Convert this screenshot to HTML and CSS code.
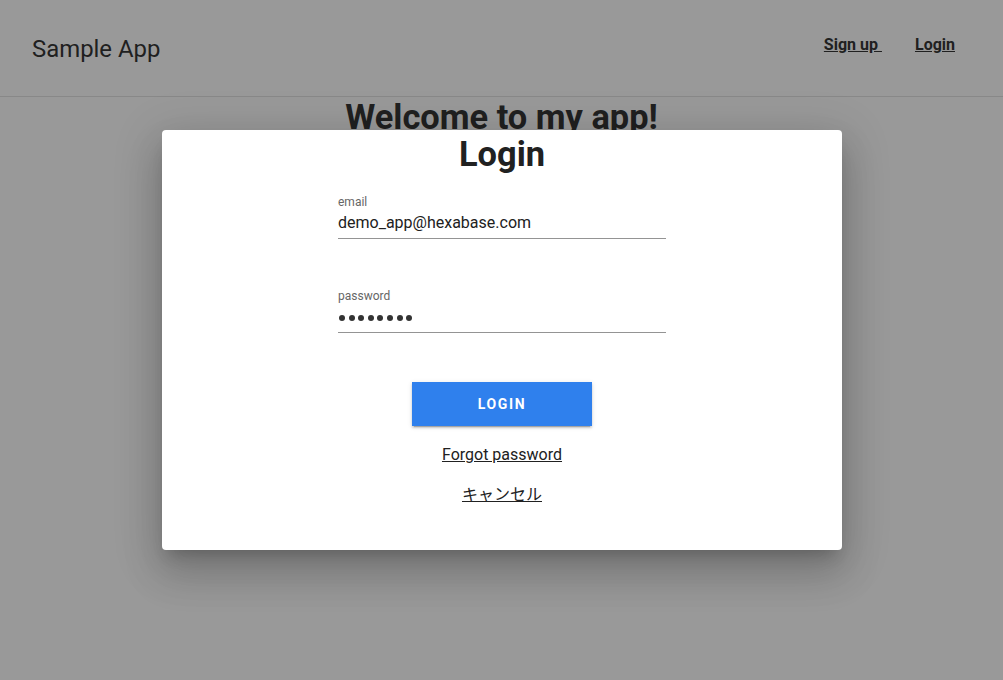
FILE: index.html
```html
<!DOCTYPE html>
<html lang="ja">
<head>
<meta charset="utf-8">
<title>Sample App</title>
<link rel="stylesheet" href="styles.css">
</head>
<body>
<header class="app-bar">
  <div class="brand">Sample App</div>
  <nav class="nav">
    <a class="nav-link" href="#">Sign up&nbsp;</a>
    <a class="nav-link" href="#">Login</a>
  </nav>
</header>
<main class="main">
  <h1 class="welcome">Welcome to my app!</h1>
</main>
<div class="overlay">
  <div class="dialog">
    <h2 class="dialog-title">Login</h2>
    <form class="form">
      <div class="field">
        <label class="field-label">email</label>
        <div class="field-value">demo_app@hexabase.com</div>
      </div>
      <div class="field field-pw">
        <label class="field-label">password</label>
        <div class="field-value dots"><span class="dot"></span><span class="dot"></span><span class="dot"></span><span class="dot"></span><span class="dot"></span><span class="dot"></span><span class="dot"></span><span class="dot"></span></div>
      </div>
      <div class="actions">
        <button type="button" class="btn">LOGIN</button>
        <a class="link" href="#">Forgot password</a>
        <a class="link cancel" href="#">キャンセル</a>
      </div>
    </form>
  </div>
</div>
</body>
</html>
```
FILE: styles.css
```css
* { box-sizing: border-box; }
html, body { margin: 0; padding: 0; }
body {
  font-family: Roboto, "Noto Sans CJK JP", sans-serif;
  color: #212121;
  background: #fff;
  width: 1003px;
  height: 680px;
  overflow: hidden;
  position: relative;
}
.app-bar {
  height: 97px;
  border-bottom: 1px solid #e0e0e0;
  display: flex;
  align-items: center;
  justify-content: space-between;
  padding: 0 48px 0 32px;
}
.brand {
  font-size: 23.9px;
  color: #212121;
  margin-top: 1px;
}
.nav {
  display: flex;
  gap: 33px;
  margin-top: -8px;
}
.nav-link {
  font-size: 16px;
  font-weight: 700;
  color: #212121;
  text-decoration: underline;
}
.main { text-align: center; }
.welcome {
  font-size: 34.4px;
  font-weight: 700;
  margin: 0;
  line-height: 40px;
}
.overlay {
  position: absolute;
  inset: 0;
  background: rgba(33, 33, 33, 0.46);
}
.dialog {
  position: absolute;
  left: 162px;
  top: 130px;
  width: 680px;
  height: 420px;
  background: #fff;
  border-radius: 4px;
  box-shadow: 0 11px 15px -7px rgba(0,0,0,.2), 0 24px 38px 3px rgba(0,0,0,.14), 0 9px 46px 8px rgba(0,0,0,.12);
  display: flex;
  flex-direction: column;
  align-items: center;
}
.dialog-title {
  font-size: 34.4px;
  font-weight: 700;
  margin: 4px 0 0;
  line-height: 40px;
}
.form {
  width: 328px;
  margin-top: 21px;
}
.field {
  border-bottom: 1px solid #949494;
  padding-bottom: 3px;
}
.field-pw { margin-top: 50px; padding-bottom: 2px; }
.field-label {
  display: block;
  font-size: 12px;
  line-height: 14px;
  color: #666;
}
.field-value {
  font-size: 16px;
  line-height: 24px;
  margin-top: 2px;
  color: #212121;
}
.dots {
  height: 24px;
  margin-top: 3px;
  display: flex;
  align-items: center;
  gap: 3.6px;
  padding-left: 1px;
}
.dot {
  width: 6px;
  height: 6px;
  border-radius: 50%;
  background: #333;
}
.actions {
  display: flex;
  flex-direction: column;
  align-items: center;
}
.btn {
  margin-top: 49px;
  width: 180px;
  height: 44px;
  border: 0;
  border-radius: 0;
  background: #2f80ed;
  color: #fff;
  font-family: Roboto, sans-serif;
  font-weight: 700;
  font-size: 14px;
  letter-spacing: 1.6px;
  box-shadow: 0 3px 1px -2px rgba(0,0,0,.2), 0 2px 2px 0 rgba(0,0,0,.14), 0 1px 5px 0 rgba(0,0,0,.12);
}
.link {
  font-size: 16px;
  color: #212121;
  text-decoration: underline;
  margin-top: 18px;
  line-height: 22px;
}
.cancel { margin-top: 18px; }
```
